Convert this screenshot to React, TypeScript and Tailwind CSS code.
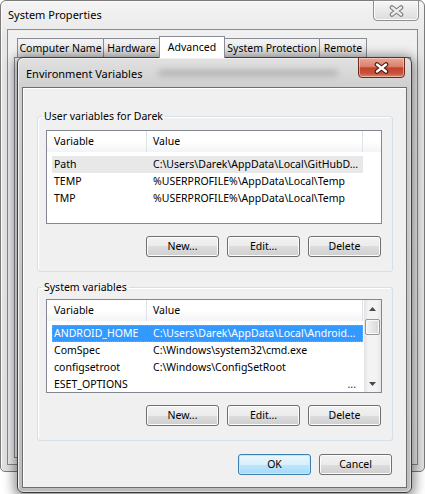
import React from "react";

interface EnvVar {
  name: string;
  value: string;
  state?: "muted" | "selected";
  dots?: boolean;
}

const USER_VARS: EnvVar[] = [
  { name: "Path", value: "C:\\Users\\Darek\\AppData\\Local\\GitHubD...", state: "muted" },
  { name: "TEMP", value: "%USERPROFILE%\\AppData\\Local\\Temp" },
  { name: "TMP", value: "%USERPROFILE%\\AppData\\Local\\Temp" },
];

const SYSTEM_VARS: EnvVar[] = [
  { name: "ANDROID_HOME", value: "C:\\Users\\Darek\\AppData\\Local\\Android...", state: "selected" },
  { name: "ComSpec", value: "C:\\Windows\\system32\\cmd.exe" },
  { name: "configsetroot", value: "C:\\Windows\\ConfigSetRoot" },
  { name: "ESET_OPTIONS", value: "...", dots: true },
];

const TABS = [
  { label: "Computer Name", w: "w-[87px]" },
  { label: "Hardware", w: "w-[57px]" },
  { label: "Advanced", w: "w-[66px]", active: true },
  { label: "System Protection", w: "w-[96px]" },
  { label: "Remote", w: "w-[48px]" },
];

function CloseGlyph({ outline, fill }: { outline: string; fill: string }) {
  return (
    <svg width="15" height="12" viewBox="0 0 15 12">
      <path d="M3 2.5 L12 9.5 M12 2.5 L3 9.5" stroke={outline} strokeWidth="4.6" strokeLinecap="round" fill="none" />
      <path d="M3 2.5 L12 9.5 M12 2.5 L3 9.5" stroke={fill} strokeWidth="2.4" strokeLinecap="round" fill="none" />
    </svg>
  );
}

function WinButton({ label, primary }: { label: string; primary?: boolean }) {
  return (
    <button
      className={`h-[21px] w-[73px] rounded-[3px] border leading-[19px] ${
        primary
          ? "border-[#3c7fb1] bg-[linear-gradient(#eaf6fd_0%,#d9f0fc_50%,#bee6fd_50%,#a7d9f5_100%)] shadow-[inset_0_0_0_1px_#c6e8fb]"
          : "border-[#707070] bg-[linear-gradient(#f2f2f2_0%,#ebebeb_50%,#dddddd_50%,#cfcfcf_100%)] shadow-[inset_0_0_0_1px_#fcfcfc]"
      }`}
    >
      {label}
    </button>
  );
}

function Arrow({ down }: { down?: boolean }) {
  return (
    <svg width="7" height="4" viewBox="0 0 7 4">
      <polygon points={down ? "0,0 7,0 3.5,4" : "0,4 7,4 3.5,0"} fill="#4a4a4a" />
    </svg>
  );
}

function Scrollbar() {
  return (
    <div className="flex w-[17px] shrink-0 flex-col bg-[linear-gradient(90deg,#e2e2e2,#f3f3f3_25%,#f3f3f3_75%,#e6e6e6)]">
      <div className="flex h-[17px] items-center justify-center">
        <Arrow />
      </div>
      <div className="mx-[1px] mt-[2px] h-[16px] rounded-[2px] border border-[#979797] bg-[linear-gradient(90deg,#f4f4f4,#e6e6e6_50%,#d6d6d6)] shadow-[inset_0_0_0_1px_#fafafa]" />
      <div className="flex-1" />
      <div className="flex h-[17px] items-center justify-center">
        <Arrow down />
      </div>
    </div>
  );
}

function VarList({ rows, scroll }: { rows: EnvVar[]; scroll?: boolean }) {
  return (
    <div className="flex h-[94px] w-[336px] border border-[#828790] bg-white">
      <div className="flex min-w-0 flex-1 flex-col overflow-hidden">
        <div className="flex h-[21px] shrink-0 bg-[linear-gradient(#ffffff,#ffffff_50%,#f2f3f5)] leading-[21px]">
          <div className="w-[100px] shrink-0 border-r border-[#dfe2e7] pl-[7px]">Variable</div>
          <div className="w-[216px] shrink-0 border-r border-[#dfe2e7] pl-[6px]">Value</div>
          <div className="flex-1" />
        </div>
        <div className="flex flex-col pt-[4px]">
          {rows.map((r) => (
            <div
              key={r.name}
              className={`ml-[5px] flex h-[17px] w-[311px] shrink-0 items-center whitespace-nowrap leading-[17px] ${
                r.state === "selected"
                  ? "bg-[#3399ff] text-white outline-1 outline-dotted outline-[#e8913a] -outline-offset-1"
                  : r.state === "muted"
                  ? "bg-[#e8e8e8]"
                  : ""
              }`}
            >
              <span className="w-[101px] shrink-0 pl-[2px]">{r.name}</span>
              {r.dots ? (
                <span className="flex flex-1 justify-end pr-[7px] text-[#1c1c5a]">...</span>
              ) : (
                <span className="flex-1">{r.value}</span>
              )}
            </div>
          ))}
        </div>
      </div>
      {scroll && <Scrollbar />}
    </div>
  );
}

function VarGroup({
  title,
  rows,
  scroll,
  className,
}: {
  title: string;
  rows: EnvVar[];
  scroll?: boolean;
  className: string;
}) {
  return (
    <fieldset className={`ml-[14px] w-[356px] rounded-[3px] border border-[#d5dfe5] pb-[14px] pl-[8px] pr-[10px] shadow-[inset_1px_1px_0_#ffffff] ${className}`}>
      <legend className="-ml-[4px] px-[2px] text-[10.5px] leading-[16px]">{title}</legend>
      <VarList rows={rows} scroll={scroll} />
      <div className="mt-[12px] flex justify-end gap-[8px] pr-[1px]">
        <WinButton label="New..." />
        <WinButton label="Edit..." />
        <WinButton label="Delete" />
      </div>
    </fieldset>
  );
}

export default function App() {
  return (
    <div className="relative h-[494px] w-[425px] overflow-hidden bg-white font-['Noto_Sans',sans-serif] text-[10.5px] text-black">
      {/* System Properties window, inactive, behind */}
      <div className="absolute left-0 top-0 flex h-[472px] w-[425px] flex-col rounded-b-[5px] rounded-t-[6px] border border-[#7b7b7b] bg-[linear-gradient(#f4f4f4,#e7e7e7_40px,#e3e3e3)] shadow-[inset_1px_1px_0_#fbfbfb]">
        <div className="flex h-[28px] shrink-0 items-start justify-between">
          <span className="pl-[7px] pt-[6px] text-[11px] leading-[16px]">System Properties</span>
          <div className="-mt-px mr-[5px] flex h-[21px] w-[46px] items-center justify-center rounded-b-[4px] border border-[#8f8f8f] bg-[linear-gradient(#f7f7f7,#e9e9e9_50%,#dcdcdc)] shadow-[inset_0_0_0_1px_#fbfbfb]">
            <CloseGlyph outline="#7d7d7d" fill="#ededed" />
          </div>
        </div>
        <div className="mx-[6px] mb-[6px] flex flex-1 flex-col border border-[#8a8a8a] bg-[#f0f0f0] px-[6px]">
          <div className="flex h-[27px] shrink-0 items-end pl-[3px]">
            {TABS.map((t, i) =>
              t.active ? (
                <div
                  key={t.label}
                  className={`${t.w} relative z-10 -mb-px -ml-px flex h-[22px] items-start justify-center whitespace-nowrap border border-b-0 border-[#898c95] bg-white pt-[2px] leading-[16px]`}
                >
                  {t.label}
                </div>
              ) : (
                <div
                  key={t.label}
                  className={`${t.w} ${i > 0 ? "-ml-px" : ""} flex h-[19px] items-center justify-center whitespace-nowrap border border-b-0 border-[#898c95] bg-[linear-gradient(#f3f3f3,#ebebeb_50%,#dedede)] leading-[16px]`}
                >
                  {t.label}
                </div>
              )
            )}
          </div>
          <div className="mb-[6px] flex-1 border border-[#898c95] bg-white" />
        </div>
      </div>

      {/* Environment Variables dialog, active */}
      <div className="absolute left-[17px] top-[57px] flex h-[436px] w-[395px] flex-col rounded-[6px] border border-[#3f3f3f] bg-[linear-gradient(#e1e1e1,#cfcfcf_29px,#bdbdbd)] px-[4px] pb-[4px] shadow-[0_2px_12px_3px_rgba(0,0,0,0.45),inset_1px_1px_0_#efefef,inset_-1px_-1px_0_#dadada]">
        <div className="flex h-[29px] shrink-0 items-start">
          <span className="pl-[4px] pt-[8px] text-[11px] leading-[16px]">Environment Variables</span>
          {/* blurred glass reflection of the window behind */}
          <div className="ml-[16px] mt-[12px] h-[6px] w-[180px] rounded-full bg-[#8c8c8c] opacity-50 blur-[3px]" />
          <div className="-mt-px ml-auto mr-[2px] flex h-[21px] w-[47px] items-center justify-center rounded-b-[4px] border border-[#6b2a1e] bg-[linear-gradient(#eba796_0%,#d9806b_45%,#c4432b_52%,#c8503a_80%,#d98870_100%)] shadow-[inset_0_0_0_1px_rgba(255,220,210,0.55)]">
            <CloseGlyph outline="#46170f" fill="#ffffff" />
          </div>
        </div>
        <div className="flex flex-1 flex-col border border-[#6e6e6e] bg-[#f0f0f0] shadow-[inset_1px_1px_0_#ffffff]">
          <VarGroup title="User variables for Darek" rows={USER_VARS} className="mt-[20px] pt-[6px]" />
          <VarGroup title="System variables" rows={SYSTEM_VARS} scroll className="mt-[7px] pt-[4px]" />
          <div className="ml-[14px] mt-[13px] flex w-[356px] justify-end gap-[8px] pr-[1px]">
            <WinButton label="OK" primary />
            <WinButton label="Cancel" />
          </div>
        </div>
      </div>
    </div>
  );
}
